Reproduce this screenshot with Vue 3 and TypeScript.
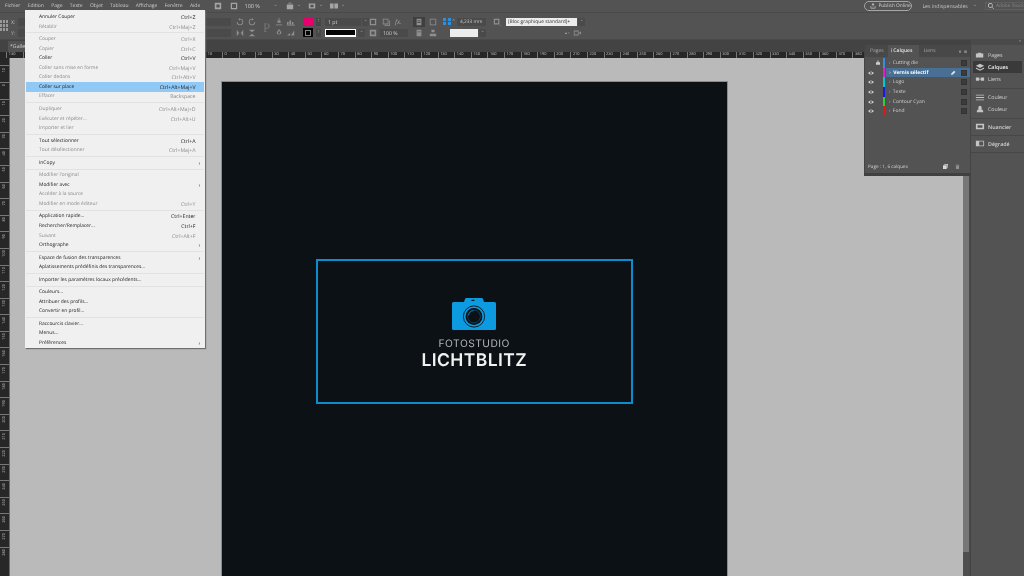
<script setup lang="ts">
interface Item { label: string; key?: string; off?: boolean; sub?: boolean; on?: boolean }
const menuGroups: Item[][] = [
  [{ label: 'Annuler Couper', key: 'Ctrl+Z' }, { label: 'Rétablir', key: 'Ctrl+Maj+Z', off: true }],
  [
    { label: 'Couper', key: 'Ctrl+X', off: true }, { label: 'Copier', key: 'Ctrl+C', off: true },
    { label: 'Coller', key: 'Ctrl+V' }, { label: 'Coller sans mise en forme', key: 'Ctrl+Maj+V', off: true },
    { label: 'Coller dedans', key: 'Ctrl+Alt+V', off: true }, { label: 'Coller sur place', key: 'Ctrl+Alt+Maj+V', on: true },
    { label: 'Effacer', key: 'Backspace', off: true },
  ],
  [
    { label: 'Dupliquer', key: 'Ctrl+Alt+Maj+D', off: true }, { label: 'Exécuter et répéter...', key: 'Ctrl+Alt+U', off: true },
    { label: 'Importer et lier', off: true },
  ],
  [{ label: 'Tout sélectionner', key: 'Ctrl+A' }, { label: 'Tout désélectionner', key: 'Ctrl+Maj+A', off: true }],
  [{ label: 'InCopy', sub: true }],
  [
    { label: "Modifier l'original", off: true }, { label: 'Modifier avec', sub: true },
    { label: 'Accéder à la source', off: true }, { label: 'Modifier en mode éditeur', key: 'Ctrl+Y', off: true },
  ],
  [
    { label: 'Application rapide...', key: 'Ctrl+Enter' }, { label: 'Rechercher/Remplacer...', key: 'Ctrl+F' },
    { label: 'Suivant', key: 'Ctrl+Alt+F', off: true }, { label: 'Orthographe', sub: true },
  ],
  [{ label: 'Espace de fusion des transparences', sub: true }, { label: 'Aplatissements prédéfinis des transparences...' }],
  [{ label: 'Importer les paramètres locaux précédents...' }],
  [{ label: 'Couleurs...' }, { label: 'Attribuer des profils...' }, { label: 'Convertir en profil...' }],
  [{ label: 'Raccourcis clavier...' }, { label: 'Menus...' }, { label: 'Préférences', sub: true }],
]
const topMenus = ['Fichier', 'Edition', 'Page', 'Texte', 'Objet', 'Tableau', 'Affichage', 'Fenêtre', 'Aide']
// Ticks that sit under the open menu keep their cell but carry no label.
const hTicks: string[] = Array.from({ length: 52 }, (_, i) => (i >= 1 && i <= 11 ? '' : String(Math.abs(i - 13) * 10)))
const vTicks: number[] = Array.from({ length: 30 }, (_, i) => Math.abs(i - 1) * 10)
const layers = [
  { name: 'Cutting die', color: '#3b8be0', lock: true },
  { name: 'Vernis sélectif', color: '#e020c0', active: true },
  { name: 'Logo', color: '#00c8d8' },
  { name: 'Texte', color: '#1a1ae8' },
  { name: 'Contour Cyan', color: '#30d030' },
  { name: 'Fond', color: '#e01818' },
]
const dockGroups = [
  [{ name: 'Pages', d: 'M1 8V3h2l1-1h3l1 1h2v5z' }, { name: 'Calques', d: 'M6 1l5 2.500L6 6 1 3.500zM1 5.500L6 8l5-2.500v1.500L6 9.500 1 7z', on: true }, { name: 'Liens', d: 'M1 3h4v4H1zM7 3h4v4H7zM5 4.500h2v1H5z' }],
  [{ name: 'Couleur', d: 'M1 2h10v1H1zM1 5h10v1H1zM1 8h10v1H1z' }, { name: 'Couleur', d: 'M2 9a4 4 0 0 1 8 0zM4 3a2 2 0 0 1 4 0v2H4z' }],
  [{ name: 'Nuancier', d: 'M1 2h10v7H1zM3 4v3h6V4z' }],
  [{ name: 'Dégradé', d: 'M1 2h10v7H1zM5 3v5h5V3z' }],
]
</script>

<template>
  <div class="app">
    <header class="menubar">
      <span v-for="m in topMenus" :key="m" class="top-item">{{ m }}</span>
      <svg class="ic first" viewBox="0 0 10 10"><path d="M1 1h8v8H1zM3 3v4h4V3z" fill-rule="evenodd" /></svg>
      <svg class="ic" viewBox="0 0 10 10"><path d="M1 1h8v8H1zM2.500 2.500v5h5v-5z" fill-rule="evenodd" /></svg>
      <span class="zoom-val">100 %</span>
      <span class="caret wide">⌄</span>
      <svg class="ic" viewBox="0 0 10 10"><path d="M1 3h8v6H1zM3 1h4v1H3z" /></svg>
      <span class="caret">⌄</span>
      <svg class="ic" viewBox="0 0 10 10"><path d="M1 2h8v6H1zM3 3.500v3h4v-3z" fill-rule="evenodd" /></svg>
      <span class="caret">⌄</span>
      <svg class="ic" viewBox="0 0 10 10"><path d="M0 2h10v6H0zM4.500 2v6h1V2z" fill-rule="evenodd" /></svg>
      <span class="caret">⌄</span>
      <span class="top-spacer"></span>
      <span class="publish">
        <svg class="ic-s" viewBox="0 0 10 10"><path d="M1 5v4h8V5H8v3H2V5zM5 0L2.500 3H4.500v3h1V3h2z" /></svg>
        Publish Online
      </span>
      <span class="workspace">Les indispensables</span>
      <span class="caret ws">⌄</span>
      <span class="search">
        <svg class="ic-s" viewBox="0 0 10 10"><path d="M4 0a4 4 0 0 1 3 6.500L10 9.300 9.300 10 6.500 7A4 4 0 1 1 4 0zm0 1.200a2.800 2.800 0 1 0 0 5.600 2.800 2.800 0 0 0 0-5.600z" fill-rule="evenodd" /></svg>
        Adobe Stock
      </span>
    </header>

    <section class="control">
      <div class="group g-grid">
        <div class="refgrid"><i v-for="n in 9" :key="n"></i></div>
      </div>
      <div class="group g-xy">
        <div class="row"><span class="lbl">X:</span><span class="field grow"></span></div>
        <div class="row"><span class="lbl">Y:</span><span class="field grow"></span></div>
      </div>
      <div class="group g-rot">
        <div class="row">
          <svg class="ic" viewBox="0 0 10 10"><path d="M5 1a4 4 0 1 1-4 4h1a3 3 0 1 0 3-3v1.500L3 1.500 5 0z" /></svg>
          <svg class="ic" viewBox="0 0 10 10"><path d="M5 1a4 4 0 1 0 4 4H8a3 3 0 1 1-3-3v1.500l2-2L5 0z" /></svg>
        </div>
        <div class="row">
          <svg class="ic" viewBox="0 0 10 10"><path d="M1 1l3 4-3 4zM9 1L6 5l3 4z" /></svg>
          <svg class="ic" viewBox="0 0 10 10"><path d="M1 1l4 3 4-3zM1 9l4-3 4 3z" /></svg>
        </div>
      </div>
      <div class="group g-p"><span class="big-p">P</span></div>
      <div class="group g-align">
        <div class="row">
          <svg class="ic" viewBox="0 0 10 10"><path d="M4.500 0h1v3h-1zM3 3h4v3H3zM1 8h8v1H1z" /></svg>
          <svg class="ic" viewBox="0 0 10 10"><path d="M0 5h2v3H0zM3 3h2v5H3zM6 5h2v3H6zM0 8.500h10v1H0z" /></svg>
        </div>
        <div class="row">
          <svg class="ic" viewBox="0 0 10 10"><path d="M5 0l3 4a3 3 0 1 1-6 0zM5 2L3.500 4.500a1.500 1.500 0 1 0 3 0z" fill-rule="evenodd" /></svg>
          <svg class="ic" viewBox="0 0 10 10"><path d="M0 8l4-3v3zM5 8l4-6v6z" /></svg>
        </div>
      </div>
      <div class="group g-swatch">
        <div class="row"><span class="swatch pink"></span><span class="mini">T</span></div>
        <div class="row"><span class="swatch black"><i></i></span><span class="mini">T</span></div>
      </div>
      <div class="group g-stroke">
        <div class="row"><span class="field stroke-w">1 pt</span><span class="arrow">⌄</span></div>
        <div class="row"><span class="stroke-preview"><i></i></span><span class="arrow">⌄</span></div>
      </div>
      <div class="group g-fx">
        <div class="row">
          <svg class="ic" viewBox="0 0 10 10"><path d="M1 1h8v8H1zM2.500 2.500v5h5v-5z" fill-rule="evenodd" /></svg>
          <svg class="ic" viewBox="0 0 10 10"><path d="M1 1h7v7H1zM2 2v5h5V2zM9 3h1v7H3V9h6z" fill-rule="evenodd" /></svg>
          <span class="fx">fx.</span>
        </div>
        <div class="row">
          <svg class="ic" viewBox="0 0 10 10"><path d="M1 1h8v8H1zM3 3v4h4V3z" fill-rule="evenodd" /></svg>
          <span class="field pct">100 %</span>
        </div>
      </div>
      <div class="group g-wrap">
        <div class="row">
          <span class="pressed"><svg class="ic" viewBox="0 0 10 10"><path d="M2 1h6v8H2zM3 3v1h4V3zM3 5v1h4V5z" fill-rule="evenodd" /></svg></span>
          <svg class="ic" viewBox="0 0 10 10"><path d="M1 1h8v8H1zM2 2v6h6V2z" fill-rule="evenodd" /></svg>
        </div>
        <div class="row">
          <span class="plain"><svg class="ic" viewBox="0 0 10 10"><path d="M2 1h6v8H2zM3 3v1h4V3z" fill-rule="evenodd" /></svg></span>
          <svg class="ic" viewBox="0 0 10 10"><path d="M3 1h4v3H3zM1 6h8v3H1z" /></svg>
        </div>
      </div>
      <div class="group g-corner">
        <div class="row">
          <span class="blue-grid"><i v-for="n in 4" :key="n"></i></span>
          <span class="spin">⌃</span>
          <span class="field mm">4,233 mm</span>
        </div>
        <div class="row row-end">
          <span class="white-field short"></span><span class="arrow">⌄</span>
        </div>
      </div>
      <div class="group g-style">
        <div class="row">
          <svg class="ic" viewBox="0 0 10 10"><path d="M1 1h7v7H1zM2.500 2.500v4h4v-4zM9 9h1v1H9z" fill-rule="evenodd" /></svg>
          <span class="white-field long">[Bloc graphique standard]+</span>
          <span class="arrow">⌄</span>
        </div>
        <div class="row row-right">
          <span class="mini-plain">▴ ▫</span>
          <svg class="ic" viewBox="0 0 10 10"><path d="M1 2h6v6H1zM2 3v4h4V3zM8 4l2-1v4L8 6z" fill-rule="evenodd" /></svg>
        </div>
      </div>
    </section>

    <div class="work">
      <main class="doc">
        <div class="tabs"><span class="tab">*Galle</span></div>
        <div class="hruler">
          <span v-for="(t, i) in hTicks" :key="i" class="htick">{{ t }}</span>
        </div>
        <div class="stage">
          <div class="vruler">
            <span v-for="(t, i) in vTicks" :key="i" class="vtick"><b>{{ t }}</b></span>
          </div>
          <div class="canvas">
            <div class="page">
              <div class="frame">
                <svg class="camera" viewBox="0 0 44 32">
                  <path fill="#0c9be0" d="M1.500 4H12l1-3q.3-1 1.500-1h15q1.200 0 1.500 1l1 3h10.500Q44 4 44 5.500V30.500Q44 32 42.500 32H1.500Q0 32 0 30.500V5.500Q0 4 1.500 4z" />
                  <rect x="19.500" y="1.800" width="3" height="1.100" fill="#0b1114" />
                  <circle cx="22" cy="18.500" r="10.600" fill="none" stroke="#0b1114" stroke-width=".9" />
                  <circle cx="22" cy="18.500" r="8.400" fill="#0b1114" />
                  <path d="M16.600 17.500a5.600 5.600 0 0 1 5-5" fill="none" stroke="#0c9be0" stroke-width=".8" />
                  <circle cx="22" cy="18.500" r="6.400" fill="none" stroke="#0c6a9a" stroke-width=".5" />
                </svg>
                <div class="studio">FOTOSTUDIO</div>
                <div class="brand">LICHTBLITZ</div>
              </div>
            </div>
          </div>
          <div class="scroll"><div class="thumb"></div></div>
        </div>
      </main>
      <aside class="dock">
        <div class="dock-top"><span>»</span></div>
        <div v-for="(g, i) in dockGroups" :key="i" class="dock-group">
          <div v-for="d in g" :key="d.name + d.d" class="dock-item" :class="{ on: d.on }">
            <svg class="dock-ic" viewBox="0 0 12 11"><path :d="d.d" fill-rule="evenodd" /></svg>
            <span>{{ d.name }}</span>
          </div>
        </div>
      </aside>
    </div>

    <nav class="menu">
      <div v-for="(g, gi) in menuGroups" :key="gi" class="mgroup">
        <div
          v-for="it in g"
          :key="it.label"
          class="mitem"
          :class="{ off: it.off, on: it.on }"
        >
          <span>{{ it.label }}</span>
          <span class="mkey">{{ it.key }}</span>
          <span class="msub">{{ it.sub ? '›' : '' }}</span>
        </div>
      </div>
    </nav>

    <section class="panel">
      <div class="ptabs">
        <span class="ptab">Pages</span>
        <span class="ptab active">⁝ Calques</span>
        <span class="ptab">Liens</span>
        <span class="pmenu">« &nbsp;≡</span>
      </div>
      <div class="layers">
        <div v-for="l in layers" :key="l.name" class="layer" :class="{ active: l.active }">
          <span class="eye">
            <svg v-if="!l.lock" viewBox="0 0 10 6"><path d="M0 3q5-5 10 0-5 5-10 0zm5-1.500a1.500 1.500 0 1 0 0 3 1.500 1.500 0 0 0 0-3z" fill-rule="evenodd" /></svg>
          </span>
          <span class="lock">
            <svg v-if="l.lock" viewBox="0 0 6 7"><path d="M1.500 3V2a1.500 1.500 0 0 1 3 0v1H6v4H0V3zM2.200 3h1.600V2a.8.8 0 0 0-1.600 0z" fill-rule="evenodd" /></svg>
          </span>
          <span class="lbar" :style="{ background: l.color }"></span>
          <span class="lname"><em>›</em> {{ l.name }}</span>
          <svg v-if="l.active" class="pencil" viewBox="0 0 8 8"><path d="M0 8l1-3 4-4 2 2-4 4z" /></svg>
          <span class="lsq"></span>
        </div>
      </div>
      <div class="pfoot">
        <span>Page : 1, 6 calques</span>
        <span class="pfoot-ics">
          <svg viewBox="0 0 8 8"><path fill="#d8d8d8" d="M0 2h6v6H0zM2 0h6v6H7V1H2z" /></svg>
          <svg viewBox="0 0 8 8"><path fill="#8f8f8f" d="M1 1h6v1H1zM1.500 2.500h5V8h-5z" /></svg>
        </span>
      </div>
    </section>
  </div>
</template>

<style scoped>
.app {
  position: relative;
  width: 1024px;
  height: 576px;
  overflow: hidden;
  display: flex;
  flex-direction: column;
  background: #535353;
  color: #c9c9c9;
  font-family: "Open Sans", "Liberation Sans", sans-serif;
  font-size: 5.2px;
  text-rendering: geometricPrecision;
  filter: blur(.35px);
}
svg { fill: #a9a9a9; display: block; }

/* top menu */
.menubar {
  height: 12px;
  display: flex;
  align-items: center;
  padding-left: 5px;
  background: #535353;
  box-sizing: border-box;
  flex: none;
}
.top-item { margin-right: 7.300px; color: #cccccc; font-size: 5px; font-weight: 500; }
.ic { width: 8px; height: 8px; flex: none; fill: #8f8f8f; }
.menubar .ic { fill: #a5a5a5; }
.ic-s { width: 6px; height: 6px; flex: none; fill: #c8c8c8; }
.first { margin-left: 6px; margin-right: 8px; }
.zoom-val { margin-left: 7px; width: 26px; font-size: 5.500px; color: #cfcfcf; }
.caret { font-size: 5px; color: #a8a8a8; margin: 0 7px 2px 3px; line-height: 1; }
.caret.wide { margin-right: 8px; }
.caret.ws { margin: 0 8px 2px 5px; }
.top-spacer { flex: 1; }
.publish {
  display: flex;
  align-items: center;
  gap: 2px;
  height: 10px;
  width: 48px;
  box-sizing: border-box;
  padding-left: 5px;
  border: 1px solid #a5a5a5;
  border-radius: 5px;
  margin-right: 10px;
  color: #d4d4d4;
  font-size: 4.800px;
  white-space: nowrap;
}
.workspace { color: #c2c2c2; font-size: 5.200px; white-space: nowrap; }
.search {
  display: flex;
  align-items: center;
  gap: 2px;
  width: 39px;
  height: 8px;
  padding-left: 2px;
  box-sizing: border-box;
  border: 1px solid #5f5f5f;
  border-right: 0;
  color: #858585;
  font-size: 4.800px;
  white-space: nowrap;
}

/* control strip */
.control {
  height: 28px;
  flex: none;
  display: flex;
  box-sizing: border-box;
  padding-top: 4px;
  background: #535353;
  border-top: 1px solid #4a4a4a;
  border-bottom: 1px solid #4a4a4a;
}
.group { display: flex; flex-direction: column; gap: 2px; flex: none; }
.row { display: flex; align-items: center; height: 9px; }
.g-grid { width: 9px; padding-top: 3px; box-sizing: border-box; }
.refgrid { display: grid; grid-template-columns: repeat(3, 2px); grid-auto-rows: 3px; gap: 1px; }
.refgrid i { border: .5px solid #999; box-sizing: border-box; }
.g-xy { width: 224px; padding-right: 2px; box-sizing: border-box; }
.lbl { width: 7px; padding-left: 2px; color: #bbb; }
.grow { flex: 1; }
.field { background: #4a4a4a; height: 8px; line-height: 8px; color: #cfcfcf; padding-left: 3px; box-sizing: border-box; }
.g-rot { width: 27px; }
.g-rot .row { gap: 4px; padding-left: 3px; }
.g-p { width: 15px; align-items: center; justify-content: center; height: 20px; padding-right: 2px; box-sizing: border-box; }
.big-p { font-size: 13px; color: #757575; font-family: "Liberation Serif", serif; line-height: 1; }
.g-align { width: 28px; }
.g-align .row { gap: 4px; }
.g-swatch { width: 22px; }
.g-swatch .row { gap: 3px; }
.swatch { width: 10px; height: 9px; display: flex; align-items: center; justify-content: center; }
.pink { background: #e5006d; }
.black { background: #050505; }
.black i { width: 4px; height: 4px; border: 1px solid #888; }
.mini { width: 5px; height: 8px; background: #474747; text-align: center; line-height: 8px; font-size: 4px; color: #9a9a9a; }
.g-stroke { width: 44px; }
.stroke-w { width: 36px; }
.arrow { font-size: 5px; line-height: 1; width: 7px; height: 8px; color: #a8a8a8; background: #4a4a4a; text-align: center; margin-left: 1px; }
.stroke-preview {
  width: 31px;
  height: 8px;
  background: #fff;
  padding: 1.500px 1px;
  box-sizing: border-box;
  margin-right: 1px;
  display: block;
}
.stroke-preview i { display: block; height: 100%; background: #050505; }
.g-fx { width: 43px; }
.g-fx .row { gap: 5px; }
.fx { color: #a0a0a0; font-size: 7px; font-family: "Liberation Serif", serif; font-style: italic; }
.g-fx .row + .row { gap: 3px; }
.pct { width: 28px; }
.g-wrap { width: 31px; padding-left: 1px; box-sizing: border-box; }
.g-wrap .row { gap: 4px; }
.pressed, .plain { width: 12px; height: 10px; display: flex; align-items: center; justify-content: center; }
.pressed { background: #3f3f3f; }
.g-corner { width: 50px; }
.blue-grid { display: grid; grid-template-columns: repeat(2, 3px); gap: 1.500px; width: 8px; }
.blue-grid i { width: 3px; height: 3px; background: #2f8fdc; }
.spin { width: 5px; font-size: 5px; text-align: center; color: #aaa; }
.mm { width: 29px; margin-left: 1px; color: #c8c8c8; font-size: 4.800px; }
.row-end { padding-left: 7px; }
.white-field { background: #ececec; height: 8px; line-height: 8px; color: #333; padding-left: 2px; box-sizing: border-box; }
.short { width: 28px; }
.long { width: 71px; margin-left: 5px; font-size: 4.900px; white-space: nowrap; overflow: hidden; }
.g-style { width: 100px; }
.row-right { padding-left: 72px; gap: 4px; }
.mini-plain { font-size: 4px; color: #aaa; }

/* work area */
.work { flex: 1; display: flex; min-height: 0; }
.doc { flex: 1; display: flex; flex-direction: column; min-width: 0; }
.tabs {
  height: 12px;
  flex: none;
  background: #434343;
  padding: 1px 0 0 8px;
  box-sizing: border-box;
  display: flex;
}
.tab { width: 70px; background: #535353; padding-left: 2px; line-height: 11px; color: #d0d0d0; white-space: nowrap; }
.hruler {
  height: 6px;
  flex: none;
  background: #272727;
  display: flex;
  padding-left: 6.200px;
  overflow: hidden;
  box-sizing: border-box;
}
.htick {
  flex: 0 0 16.600px;
  box-sizing: border-box;
  border-left: .5px solid #777;
  padding-left: 1.500px;
  font-size: 3.900px;
  line-height: 6px;
  color: #c4c4c4;
}
.stage { flex: 1; display: flex; min-height: 0; }
.vruler {
  width: 10px;
  flex: none;
  box-sizing: border-box;
  background: #272727;
  border-right: 1px solid #6a6a6a;
  padding-top: 7.400px;
  overflow: hidden;
}
.vtick {
  display: flex;
  justify-content: center;
  align-items: flex-start;
  height: 16.600px;
  box-sizing: border-box;
  border-top: .5px solid #777;
  padding-top: 1.500px;
}
.vtick b {
  writing-mode: vertical-rl;
  transform: rotate(180deg);
  font-size: 3.900px;
  line-height: 8px;
  font-weight: 400;
  color: #c4c4c4;
}
.canvas {
  flex: 1;
  min-width: 0;
  overflow: hidden;
  background: #bababa;
  padding: 24px 0 0 212px;
  box-sizing: border-box;
}
.page {
  width: 505px;
  height: 600px;
  background: #0b1114;
  outline: 1px solid #8b8b8b;
  padding: 176.500px 0 0 93.500px;
  box-sizing: border-box;
}
.frame {
  width: 317.500px;
  height: 145.500px;
  box-sizing: border-box;
  border: 2px solid #0b8dcf;
  display: flex;
  flex-direction: column;
  align-items: center;
  padding-top: 37.500px;
}
.camera { width: 44px; height: 32px; flex: none; }
.studio {
  margin-top: 8px;
  color: #b5b7b8;
  font-family: Inter, "Open Sans", sans-serif;
  font-size: 10.300px;
  line-height: 12px;
  letter-spacing: .45px;
}
.brand {
  margin-top: 2px;
  color: #f2f2f2;
  font-family: Inter, "Open Sans", sans-serif;
  font-weight: 600;
  font-size: 17.500px;
  line-height: 18px;
  letter-spacing: .4px;
}
.scroll {
  width: 7px;
  flex: none;
  background: #767676;
  border-right: 1px solid #4a4a4a;
  box-sizing: border-box;
  display: flex;
  flex-direction: column;
  justify-content: flex-end;
}
.thumb { height: 24px; background: #4e4e4e; }

/* dock */
.dock {
  width: 54px;
  flex: none;
  border-left: 1px solid #444;
  box-sizing: border-box;
  background: #535353;
}
.dock-top {
  height: 5px;
  background: #4a4a4a;
  text-align: right;
  padding-right: 3px;
  font-size: 4px;
  line-height: 4px;
  color: #aaa;
}
.dock-group {
  padding: 2.500px 2px 2.500px 2px;
  border-bottom: 1px solid #474747;
  display: flex;
  flex-direction: column;
}
.dock-top + .dock-group { padding-top: 4px; }
.dock-item {
  display: flex;
  align-items: center;
  gap: 3px;
  height: 12px;
  padding-left: 2px;
  font-size: 5.300px;
  color: #d2d2d2;
}
.dock-group + .dock-group + .dock-group .dock-item { height: 11px; font-weight: 600; }
.dock-item.on { background: #3a3a3a; color: #efefef; font-weight: 600; }
.dock-ic { width: 10px; height: 9px; fill: #c4c4c4; flex: none; }

/* edit menu */
.menu {
  position: absolute;
  left: 25px;
  top: 10px;
  width: 180px;
  height: 338px;
  background: #f0f0f0;
  box-sizing: border-box;
  padding: 2.300px 1px 0;
  box-shadow: 1px 1px 1px #6f6f6f;
  color: #1c1c1c;
}
.mgroup { border-bottom: 1px solid #e2e2e2; padding-bottom: 1px; margin-bottom: 1px; }
.mgroup:last-child { border: 0; }
.mitem {
  display: flex;
  align-items: center;
  height: 9.550px;
  padding-left: 13px;
  font-size: 4.900px;
  font-weight: 500;
  white-space: nowrap;
}
.mkey { margin-left: auto; font-size: 5.200px; }
.msub { width: 8.500px; padding-left: 3px; box-sizing: border-box; color: #555; font-size: 6px; line-height: 1; }
.mitem.off { color: #8a8a8a; }
.mitem.on { background: #90c8f6; color: #1c1c1c; }

/* layers panel */
.panel {
  position: absolute;
  left: 864px;
  top: 45px;
  width: 106px;
  height: 131px;
  background: #535353;
  box-sizing: border-box;
  border-left: 1px solid #444;
  border-bottom: 3px solid #404040;
  display: flex;
  flex-direction: column;
}
.ptabs { height: 12px; display: flex; background: #484848; flex: none; align-items: stretch; padding-left: 2px; }
.ptab { padding: 0 3px; line-height: 12px; color: #a8a8a8; margin-right: 1px; font-size: 5px; }
.ptab.active { background: #535353; color: #e2e2e2; padding: 0 7px 0 3px; font-weight: 600; }
.pmenu { margin-left: auto; padding-right: 3px; line-height: 12px; color: #c0c0c0; }
.layers { flex: 1; padding-top: 1px; }
.layer { display: flex; align-items: center; height: 9.700px; }
.eye { width: 9px; padding-left: 2px; box-sizing: border-box; flex: none; }
.eye svg { width: 6px; height: 4px; fill: #d0d0d0; margin-left: 1px; }
.lock { width: 9px; flex: none; padding-left: 2px; box-sizing: border-box; }
.lock svg { width: 4px; height: 5px; fill: #cfcfcf; }
.lbar { width: 2px; height: 100%; flex: none; }
.lname { flex: 1; padding-left: 4px; color: #cfcfcf; font-size: 5px; white-space: nowrap; }
.lname em { font-style: normal; margin-right: 1px; color: #b5b5b5; }
.layer.active .lname { color: #fff; font-weight: 700; }
.layer.active { background: linear-gradient(to right, transparent 21px, #4a6f94 21px); }
.pencil { width: 5px; height: 5px; fill: #e8e8e8; margin-right: 5px; }
.lsq { width: 4px; height: 4px; background: #3b3b3b; border: .5px solid #333; margin-right: 3px; flex: none; }
.pfoot {
  height: 13px;
  flex: none;
  display: flex;
  align-items: center;
  padding: 0 3px 0 3px;
  color: #d0d0d0;
  font-size: 4.700px;
}
.pfoot-ics { margin-left: auto; display: flex; gap: 7px; padding-right: 7px; }
.pfoot-ics svg { width: 5px; height: 5px; }
</style>

<style>
body { margin: 0; background: #535353; }
</style>
